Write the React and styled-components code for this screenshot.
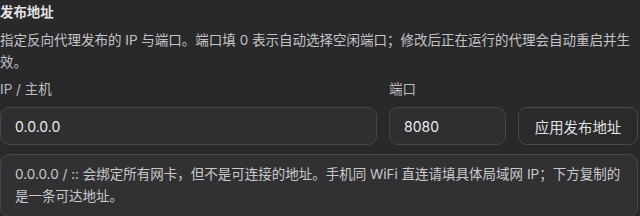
import React from 'react';
import styled, { createGlobalStyle } from 'styled-components';

const GlobalStyle = createGlobalStyle`
  html, body {
    margin: 0;
    padding: 0;
    background: #29292b;
  }
  body {
    font-family: "Inter", "Noto Sans CJK SC", sans-serif;
    -webkit-font-smoothing: antialiased;
  }
`;

const Section = styled.section`
  width: 638px;
  padding-top: 2px;
  color: #c9c9cb;
`;

const Title = styled.h3`
  margin: 0;
  font-size: 13.4px;
  line-height: 20px;
  font-weight: 600;
  color: #e4e4e6;
`;

const Description = styled.p`
  margin: 7px 0 0;
  font-size: 13.5px;
  line-height: 22px;
  color: #c4c4c6;
`;

const FormGrid = styled.div`
  display: grid;
  grid-template-columns: 1fr 117px 120px;
  column-gap: 12px;
  row-gap: 8px;
  margin-top: 6px;
  align-items: end;
`;

const Label = styled.label`
  font-size: 13.5px;
  line-height: 20px;
  color: #bdbdbf;
`;

const Input = styled.input`
  box-sizing: border-box;
  width: 100%;
  height: 38px;
  padding: 0 14px;
  border: 1px solid #474749;
  border-radius: 9px;
  background: #2f2f31;
  color: #ececee;
  font-family: inherit;
  font-size: 14px;
  outline: 0;
`;

const Button = styled.button`
  box-sizing: border-box;
  height: 38px;
  border: 1px solid #4a4a4c;
  border-radius: 9px;
  background: #2a2a2c;
  color: #e2e2e4;
  font-family: inherit;
  font-size: 14.4px;
  cursor: pointer;
`;

const Note = styled.div`
  box-sizing: border-box;
  margin-top: 9px;
  padding: 8px 14px 9px;
  border: 1px solid #48484a;
  border-radius: 9px;
  background: #313133;
  font-size: 13.5px;
  line-height: 22px;
  color: #c9c9cb;
`;

const App = () => (
  <>
    <GlobalStyle />
    <Section>
      <Title>发布地址</Title>
      <Description>
        指定反向代理发布的 IP 与端口。端口填 0 表示自动选择空闲端口；修改后正在运行的代理会自动重启并生效。
      </Description>
      <FormGrid>
        <Label htmlFor="host">IP / 主机</Label>
        <Label htmlFor="port">端口</Label>
        <span />
        <Input id="host" defaultValue="0.0.0.0" />
        <Input id="port" defaultValue="8080" />
        <Button type="button">应用发布地址</Button>
      </FormGrid>
      <Note>
        0.0.0.0 / :: 会绑定所有网卡，但不是可连接的地址。手机同 WiFi 直连请填具体局域网 IP；下方复制的是一条可达地址。
      </Note>
    </Section>
  </>
);

export default App;
